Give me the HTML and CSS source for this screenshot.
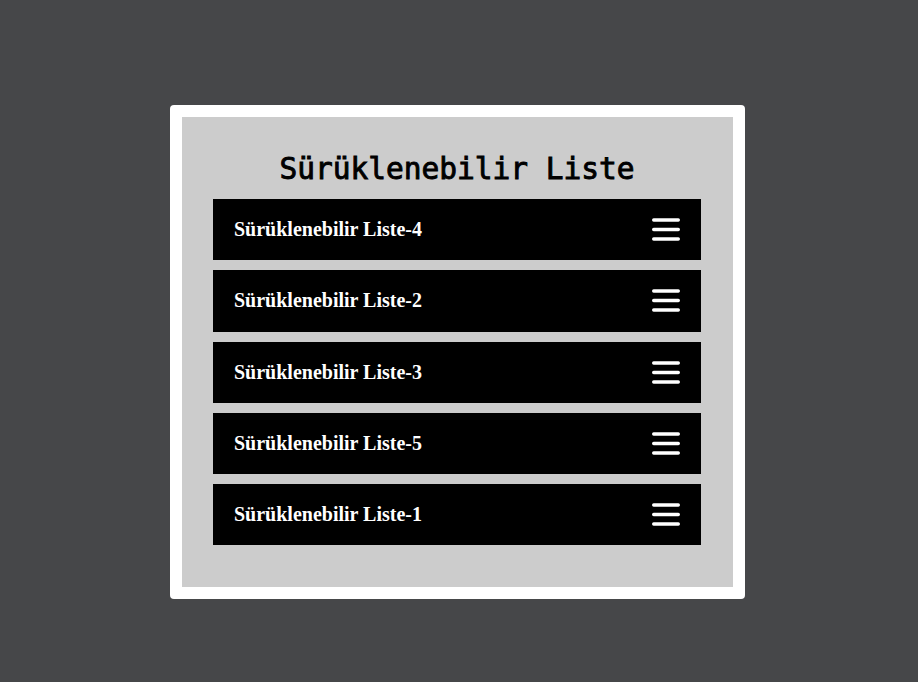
FILE: index.html
```html
<!DOCTYPE html>
<html lang="tr">
<head>
<meta charset="utf-8">
<title>Sürüklenebilir Liste</title>
<link rel="stylesheet" href="styles.css">
</head>
<body>
<div class="frame">
  <div class="panel">
    <h1 class="title">Sürüklenebilir Liste</h1>
    <ul class="list">
      <li class="item"><span class="label">Sürüklenebilir Liste-4</span><svg class="bars" viewBox="0 0 28 23" width="28" height="23"><path d="M1.7 2H26.3M1.7 11.5H26.3M1.7 21H26.3"/></svg></li>
      <li class="item"><span class="label">Sürüklenebilir Liste-2</span><svg class="bars" viewBox="0 0 28 23" width="28" height="23"><path d="M1.7 2H26.3M1.7 11.5H26.3M1.7 21H26.3"/></svg></li>
      <li class="item"><span class="label">Sürüklenebilir Liste-3</span><svg class="bars" viewBox="0 0 28 23" width="28" height="23"><path d="M1.7 2H26.3M1.7 11.5H26.3M1.7 21H26.3"/></svg></li>
      <li class="item"><span class="label">Sürüklenebilir Liste-5</span><svg class="bars" viewBox="0 0 28 23" width="28" height="23"><path d="M1.7 2H26.3M1.7 11.5H26.3M1.7 21H26.3"/></svg></li>
      <li class="item"><span class="label">Sürüklenebilir Liste-1</span><svg class="bars" viewBox="0 0 28 23" width="28" height="23"><path d="M1.7 2H26.3M1.7 11.5H26.3M1.7 21H26.3"/></svg></li>
    </ul>
  </div>
</div>
</body>
</html>
```

FILE: styles.css
```css
html, body {
  margin: 0;
  padding: 0;
  background: #464749;
  height: 100%;
}
body {
  overflow: hidden;
}
.frame {
  width: 575px;
  box-sizing: border-box;
  margin: 105px 0 0 170px;
  padding: 12px;
  background: #ffffff;
  border-radius: 4px;
}
.panel {
  background: #cccccc;
  padding: 35px 32px 41.75px 31px;
}
.title {
  margin: 0 0 13px 0;
  font-family: "DejaVu Sans Mono", monospace;
  font-weight: normal;
  -webkit-text-stroke: 0.9px #000;
  font-size: 29.5px;
  line-height: 34px;
  text-align: center;
  color: #000;
}
.list {
  list-style: none;
  margin: 0;
  padding: 0;
  display: flex;
  flex-direction: column;
  gap: 10px;
}
.item {
  height: 61.25px;
  background: #000;
  display: flex;
  align-items: center;
  justify-content: space-between;
  padding: 0 21px;
}
.label {
  font-family: "Liberation Serif", "Times New Roman", serif;
  font-weight: bold;
  font-size: 20px;
  color: #fff;
}
.bars {
  display: block;
  fill: none;
  stroke: #fff;
  stroke-width: 3.4;
  stroke-linecap: round;
}
```
